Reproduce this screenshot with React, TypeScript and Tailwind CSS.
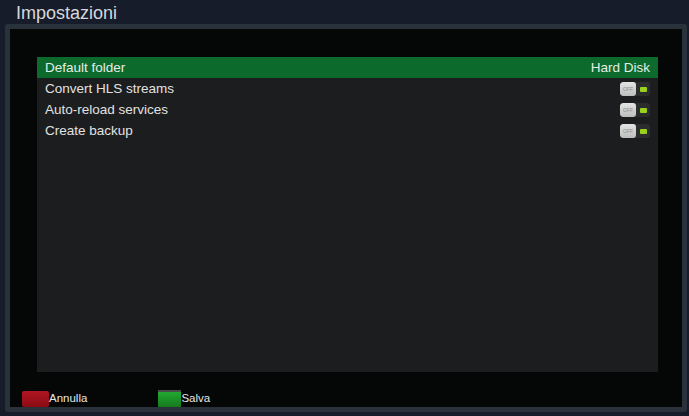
const rows = [
  { label: "Default folder", value: "Hard Disk" },
  { label: "Convert HLS streams", toggle: true },
  { label: "Auto-reload services", toggle: true },
  { label: "Create backup", toggle: true },
];

function Toggle() {
  return (
    <div className="flex h-[14px] w-[30px] overflow-hidden rounded-[3px] bg-[#2b2d2c]">
      <div className="flex w-[16px] items-center justify-center rounded-[3px] bg-[linear-gradient(#e4e4e4,#bdbdbd)] text-[5px] leading-none text-[#8a8a8a]">
        OFF
      </div>
      <div className="flex flex-1 items-center justify-center">
        <div className="h-[5px] w-[7px] rounded-[1px] bg-[#9bd21c]" />
      </div>
    </div>
  );
}

export default function App() {
  return (
    <div
      className="flex h-[416px] w-[689px] flex-col bg-[#161c2a] text-[#dcdcdc]"
      style={{ fontFamily: "'Liberation Sans', Arial, sans-serif" }}
    >
      <div className="h-[25px] pl-4 pt-[2px] text-[18px] leading-[22px] text-[#d6d8dc]">Impostazioni</div>
      <div className="mb-[4px] ml-[5px] mr-[2px] flex flex-1 flex-col rounded-[3px] border-[5px] border-[#29323b] bg-[#040706]">
        <div className="ml-[27px] mr-[24px] mt-[28px] h-[315px] bg-[#1c1d1f]">
          {rows.map((r, i) => (
            <div
              key={r.label}
              className={`flex h-[21px] items-center justify-between pl-2 pr-2 pt-[1px] text-[13.5px] ${
                i === 0 ? "bg-[#0c6b2c] text-[#e6ede8]" : "text-[#e2e2e2]"
              }`}
            >
              <span>{r.label}</span>
              {r.toggle ? <Toggle /> : <span>{r.value}</span>}
            </div>
          ))}
        </div>
        <div className="flex items-center pl-[12px] pt-[18px] text-[11.5px] text-[#e6e6e6]">
          <div className="h-[16px] w-[27px] rounded-[2px] bg-[linear-gradient(#b01622,#8a0c14)]" />
          <span>Annulla</span>
          <div className="ml-[71px] h-[17px] w-[23px] border-t-[2px] border-[#4a4a4a] bg-[linear-gradient(#23a830,#157a1e)]" />
          <span>Salva</span>
        </div>
      </div>
    </div>
  );
}
